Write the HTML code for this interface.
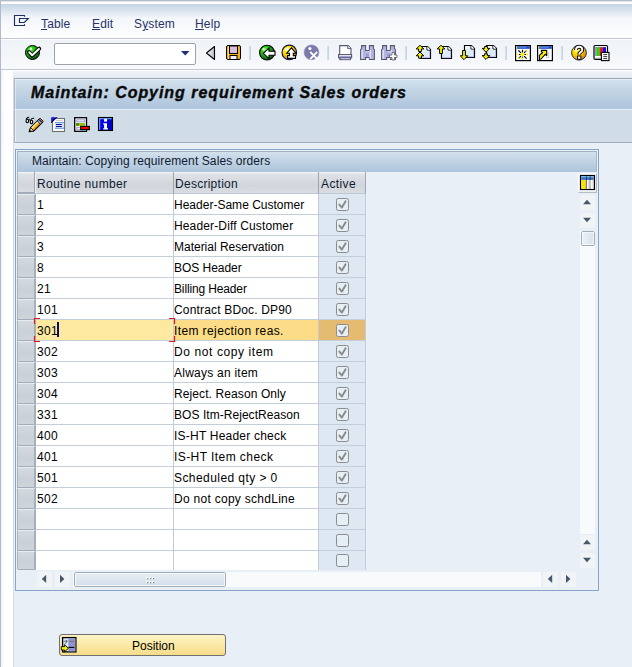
<!DOCTYPE html>
<html><head><meta charset="utf-8">
<style>
html,body{margin:0;padding:0}
body{width:632px;height:667px;overflow:hidden;position:relative;background:#e9eff7;font-family:"Liberation Sans",sans-serif;font-size:12px;color:#000}
.a{position:absolute}
#menubar{left:0;top:0;width:632px;height:38px;background:linear-gradient(#b3bdc9 0,#b3bdc9 1px,#dfe4ea 1px,#dfe4ea 2px,#fff 2px,#fff 4px,#c4d3e4 4px,#f3f6fa 18px,#fdfeff 37px)}
.mi{position:absolute;top:17px;color:#26336a;font-size:12px;line-height:14px;letter-spacing:0.15px}
.mi u{text-decoration:underline;text-underline-offset:1px}
#mline{left:0;top:38px;width:632px;height:1px;background:#bfc8d3}
#toolbar{left:0;top:39px;width:632px;height:30px;background:linear-gradient(#fff 0,#fff 1px,#eff3f7 1px,#f7f9fb 29px)}
#tline{left:0;top:69px;width:632px;height:1px;background:#bfc8d3}
#leftstrip{left:0;top:0;width:1px;height:667px;background:#b0bccb}
#strip2{left:1px;top:70px;width:12px;height:597px;background:linear-gradient(90deg,#eef1f4,#fff 3px,#fff)}
#strip3{left:13px;top:70px;width:1px;height:597px;background:linear-gradient(#f4f6f9,#dfe5ec 8px,#d5dce6 12px)}
#above{left:14px;top:70px;width:618px;height:8px;background:linear-gradient(#fff 0,#fff 1px,#eff3f7 1px,#e6ebf2 8px)}
#titlebar{left:14px;top:78px;width:618px;height:31px;box-sizing:border-box;border-top:1px solid #97a6b6;border-left:1px solid #a9b6c4;background:linear-gradient(#e6eef6 0,#e6eef6 1px,#d0dfeb 1px,#adc4dc 100%);box-shadow:inset 1px 0 rgba(255,255,255,0.45)}
#titlebar .t{position:absolute;left:16px;top:5px;font-weight:bold;font-style:italic;font-size:16px;letter-spacing:0.95px;color:#0a0a0a;-webkit-text-stroke:0.4px #0a0a0a}
#apptb{left:14px;top:109px;width:618px;height:34px;box-sizing:border-box;border-top:1px solid #e6edf3;border-left:1px solid #a9b6c4;border-bottom:1px solid #9fafbf;background:#d0dde7;box-shadow:inset 1px 0 #e8eef4}
#panel{left:15px;top:149px;width:584px;height:442px;box-sizing:border-box;border:1px solid #86a4c8;background:#e9eff7}
#ptitle{left:17px;top:151px;width:580px;height:21px;box-sizing:border-box;border-top:1px solid #a2b2c2;border-left:1px solid #a8b8c8;border-right:1px solid #a8b8c8;background:linear-gradient(#d2e0ec,#adc4db)}
#ptitle span{position:absolute;left:14px;top:2px;color:#101a30;letter-spacing:0.1px}
.hd{position:absolute;top:172px;height:22px;box-sizing:border-box;background:linear-gradient(#eff1f4 0,#eff1f4 1px,#dfe2e6 2px,#d1d6dc 65%,#d9dde1 100%);border-right:1px solid #9aa6b2;border-bottom:1px solid #bcc8d4}
.hd span{position:absolute;left:3px;top:5px;color:#101a30;letter-spacing:0.15px}
.rs{position:absolute;left:17px;width:19px;box-sizing:border-box;border-left:1px solid #a9b5c1;border-right:2px solid #a4b0bc;border-bottom:1px solid #a2adb9;border-top:1px solid #e9edf1;background:linear-gradient(#d4d9df,#c9d0d7 60%,#cfd5db)}
.c{position:absolute;box-sizing:border-box;border-bottom:1px solid #c3ced9;border-right:1px solid #bfcbd7}
.c span{position:absolute;left:1px;top:4px;color:#000;white-space:pre}
.ac svg{position:absolute;left:17px;top:4px}
.ic{position:absolute}
</style></head><body>
<div id="menubar" class="a"></div>
<svg class="a" style="left:0;top:0" width="32" height="32" viewBox="0 0 32 32"><path d="M24.5 16.8 V15.5 H14.5 V25.5 H24.5 V24.2 M19.5 18.5 H28.3 L24.3 22.5 H19.5 Z" fill="none" stroke="#1f2e66" stroke-width="1.15"/></svg>
<span class="mi" style="left:41px"><u>T</u>able</span>
<span class="mi" style="left:92px"><u>E</u>dit</span>
<span class="mi" style="left:134px">S<u>y</u>stem</span>
<span class="mi" style="left:195px"><u>H</u>elp</span>
<div id="mline" class="a"></div>
<div id="toolbar" class="a"></div>
<div id="tline" class="a"></div>
<svg class="a" style="left:0;top:0" width="632" height="70" viewBox="0 0 632 70">
<defs>
<radialGradient id="gG" cx="0.35" cy="0.3" r="0.75"><stop offset="0" stop-color="#9cff7a"/><stop offset="0.25" stop-color="#2ed21a"/><stop offset="0.7" stop-color="#118a12"/><stop offset="1" stop-color="#064a08"/></radialGradient>
<radialGradient id="gY" cx="0.35" cy="0.3" r="0.8"><stop offset="0" stop-color="#fffbd0"/><stop offset="0.3" stop-color="#ffe600"/><stop offset="0.75" stop-color="#f0a000"/><stop offset="1" stop-color="#c05a00"/></radialGradient>
<linearGradient id="gTri" x1="0" x2="1"><stop offset="0" stop-color="#ffffff"/><stop offset="1" stop-color="#b8bcc4"/></linearGradient>
</defs>
<!-- enter check -->
<circle cx="32.5" cy="52.5" r="7" fill="url(#gG)" stroke="#000" stroke-width="1"/>
<circle cx="31" cy="48.8" r="1.2" fill="#e8ffe0"/>
<path d="M29 52 L32.2 55.6 L39.2 48.6" fill="none" stroke="#000" stroke-width="4" stroke-linecap="round" stroke-linejoin="round"/>
<path d="M29.3 52.2 L32.2 55.2 L38.9 48.9" fill="none" stroke="#fff" stroke-width="2" stroke-linecap="round" stroke-linejoin="round"/>
<!-- command field -->
<rect x="54.5" y="43.5" width="141" height="21" rx="1.5" fill="#fff" stroke="#9ea1a6"/>
<path d="M181 51 H189.5 L185.25 55.5 Z" fill="#1e3278"/>
<!-- back triangle -->
<path d="M214.5 46.5 V59.5 L206.5 53 Z" fill="url(#gTri)" stroke="#000" stroke-width="1.1" stroke-linejoin="round"/>
<!-- save -->
<rect x="226.5" y="45.5" width="14" height="14" rx="1.5" fill="#f2b21c" stroke="#000"/>
<rect x="228" y="46" width="1.5" height="13" fill="#ffd860"/>
<rect x="229.5" y="46" width="8" height="7.5" fill="#d8bfe0" stroke="#000" stroke-width="1"/>
<rect x="230" y="55.5" width="7" height="4" fill="#f4eefa" stroke="#000" stroke-width="1"/>
<!-- separators -->
<rect x="249.5" y="46" width="1.2" height="14" fill="#b4c8de"/>
<rect x="327.5" y="46" width="1.2" height="14" fill="#b4c8de"/>
<rect x="405.5" y="46" width="1.2" height="14" fill="#b4c8de"/>
<rect x="505.5" y="46" width="1.2" height="14" fill="#b4c8de"/>
<rect x="561.5" y="46" width="1.2" height="14" fill="#b4c8de"/>
<!-- green back -->
<circle cx="267" cy="52.6" r="7.4" fill="url(#gG)" stroke="#000" stroke-width="1.1"/>
<path d="M263.3 53.3 L269 48 V51.2 H275 V55.3 H269 V58.6 Z" fill="#fff" stroke="#000" stroke-width="1.1"/>
<circle cx="263.5" cy="49.2" r="1.1" fill="#f0ffe8"/>
<!-- yellow up -->
<circle cx="289.3" cy="52.4" r="7.3" fill="url(#gY)" stroke="#10104a" stroke-width="1.1"/>
<circle cx="286.5" cy="49.3" r="1.2" fill="#fffff0"/>
<path d="M291.4 47.8 L296 53.2 H293.3 V55.6 H295.5 V58.4 H287.5 V55.6 H289.5 V53.2 H286.8 Z" fill="#fff" stroke="#000" stroke-width="1.1"/>
<!-- cancel gray -->
<circle cx="311.5" cy="52.3" r="7.4" fill="#7a79a8" stroke="#8a8ac4" stroke-width="0.6"/>
<circle cx="309.9" cy="48.6" r="1.6" fill="#fff"/>
<path d="M310.2 51.8 L317.2 59.2 M317.2 51.8 L310.2 59.2" stroke="#fff" stroke-width="1.9"/>
<!-- print -->
<path d="M339.7 54.2 V45.6 H348.2 L351 48.4 V54.2" fill="#fff" stroke="#55556e" stroke-width="1.1"/>
<path d="M347.7 45.6 V48.6 H351" fill="#e4e4f4" stroke="#55556e" stroke-width="0.9"/>
<rect x="338.6" y="54.6" width="13" height="3.2" fill="#fff" stroke="#55556e" stroke-width="1.1"/>
<rect x="339.4" y="56.2" width="11.6" height="1.3" fill="#8c8cd8"/>
<rect x="339.8" y="57.8" width="10.6" height="1.8" fill="#fff" stroke="#55556e" stroke-width="1.1"/>
<rect x="342" y="58.2" width="8" height="1.1" fill="#b8b8e8"/>
<!-- binoculars -->
<g fill="#b4b4e2" stroke="#55556e" stroke-width="1.05">
<path d="M360.6 59.4 V49.6 L361.6 48.6 V45.6 H365.6 V50.6 H369.4 V45.6 H373.4 V48.6 L374.4 49.6 V59.4 H369.4 V57.4 H365.6 V59.4 Z"/>
<path d="M381.6 59.4 V49.6 L382.6 48.6 V45.6 H386.6 V50.6 H390.4 V45.6 H394.4 V48.6 L395.4 49.6 V59.4 H390.4 V57.4 H386.6 V59.4 Z"/>
</g>
<g fill="#9a9ad0"><rect x="366.2" y="53.6" width="2.6" height="3.2"/><rect x="387.2" y="53.6" width="2.6" height="3.2"/></g>
<path d="M362.1 50 V58.6 M370.1 50 V58.6 M383.1 50 V58.6 M391.1 50 V58.6" stroke="#f4f4ff" stroke-width="1"/>
<path d="M366 51.6 H369 M387 51.6 H390" stroke="#d8d8f4" stroke-width="0.9"/>
<path d="M392 52.5 H394.5 V55 H397 V57.5 H394.5 V60 H392 V57.5 H389.5 V55 H392 Z" fill="#fff" stroke="#55556e" stroke-width="0.8"/>
<!-- page icons -->
<defs><linearGradient id="pgG" x1="0" y1="0" x2="1" y2="1"><stop offset="0" stop-color="#ffffff"/><stop offset="0.5" stop-color="#d8eaf6"/><stop offset="1" stop-color="#e8f0ff"/></linearGradient></defs>
<path d="M420.5 58.5 V46.5 H427.5 L430.5 49.5 V58.5 Z" fill="url(#pgG)" stroke="#000" stroke-width="1.15"/>
<path d="M421.5 57.6 H429.6 V50" fill="none" stroke="#b4b4f4" stroke-width="0.9"/>
<path d="M427 46.5 V50 H430.5" fill="#fff" stroke="#000" stroke-width="1"/>
<path d="M427.5 46.8 L430.2 49.5 H427.5 Z" fill="#fff"/>
<path d="M441.5 58.5 V46.5 H448.5 L451.5 49.5 V58.5 Z" fill="url(#pgG)" stroke="#000" stroke-width="1.15"/>
<path d="M442.5 57.6 H450.6 V50" fill="none" stroke="#b4b4f4" stroke-width="0.9"/>
<path d="M448 46.5 V50 H451.5" fill="#fff" stroke="#000" stroke-width="1"/>
<path d="M448.5 46.8 L451.2 49.5 H448.5 Z" fill="#fff"/>
<path d="M464.5 57.5 V45.5 H471.5 L474.5 48.5 V57.5 Z" fill="url(#pgG)" stroke="#000" stroke-width="1.15"/>
<path d="M465.5 56.6 H473.6 V49" fill="none" stroke="#b4b4f4" stroke-width="0.9"/>
<path d="M471 45.5 V49 H474.5" fill="#fff" stroke="#000" stroke-width="1"/>
<path d="M471.5 45.8 L474.2 48.5 H471.5 Z" fill="#fff"/>
<path d="M486.5 57.5 V45.5 H493.5 L496.5 48.5 V57.5 Z" fill="url(#pgG)" stroke="#000" stroke-width="1.15"/>
<path d="M487.5 56.6 H495.6 V49" fill="none" stroke="#b4b4f4" stroke-width="0.9"/>
<path d="M493 45.5 V49 H496.5" fill="#fff" stroke="#000" stroke-width="1"/>
<path d="M493.5 45.8 L496.2 48.5 H493.5 Z" fill="#fff"/>
<path d="M420 45.2 L423.8 49.0 H421.4 V51.5 H418.6 V49.0 H416.2 Z" fill="#f8f000" stroke="#000" stroke-width="1"/>
<path d="M420 52 L423.8 55.8 H421.4 V58.2 H418.6 V55.8 H416.2 Z" fill="#f8f000" stroke="#000" stroke-width="1"/>
<path d="M441 45.2 L444.8 49.0 H442.4 V53.5 H439.6 V49.0 H437.2 Z" fill="#f8f000" stroke="#000" stroke-width="1"/>
<path d="M464 59.6 L467.8 55.800000000000004 H465.4 V50.5 H462.6 V55.800000000000004 H460.2 Z" fill="#f8f000" stroke="#000" stroke-width="1"/>
<path d="M486 52.2 L489.8 48.400000000000006 H487.4 V46.5 H484.6 V48.400000000000006 H482.2 Z" fill="#f8f000" stroke="#000" stroke-width="1"/>
<path d="M486 59.4 L489.8 55.6 H487.4 V53.8 H484.6 V55.6 H482.2 Z" fill="#f8f000" stroke="#000" stroke-width="1"/>
<!-- new session -->
<rect x="515.6" y="45.6" width="14.8" height="15" fill="#fff" stroke="#000" stroke-width="1.2"/>
<rect x="516.2" y="46.2" width="13.6" height="2.6" fill="#1848c8"/>
<rect x="517.5" y="46.6" width="9" height="1.2" fill="#5a88e0"/>
<rect x="516.2" y="46.2" width="1" height="2.6" fill="#f8f000"/>
<g stroke="#000" stroke-width="1.2">
<path d="M522.5 49.8 V52.6 M522.5 56.4 V59.3 M518 54.5 H520.6 M524.4 54.5 H527 M518.4 50.4 L520.9 52.9 M524.1 56.1 L526.6 58.6 M526.6 50.4 L524.1 52.9 M520.9 56.1 L518.4 58.6"/>
</g>
<g stroke="#f8f000" stroke-width="1.4">
<path d="M517 54.5 H519 M526 54.5 H528.2 M526.8 50.2 L525.6 51.4 M518.2 58.8 L519.4 57.6 M522.5 57.6 V59"/>
</g>
<circle cx="522.5" cy="54.5" r="1.8" fill="#f8f000"/>
<!-- shortcut -->
<rect x="537.6" y="45.6" width="14.8" height="15" fill="#fff" stroke="#000" stroke-width="1.2"/>
<rect x="538.2" y="46.2" width="13.6" height="2.6" fill="#1848c8"/>
<rect x="539.5" y="46.6" width="9" height="1.2" fill="#5a88e0"/>
<rect x="538.2" y="46.2" width="1" height="2.6" fill="#f8f000"/>
<path d="M548.6 52 V57.5 H546" fill="none" stroke="#c8ccd8" stroke-width="0.9"/>
<path d="M541.3 50.4 V51.6 L542.6 52.5 L539.4 55.4 V59.4 L541 59 L545.2 54.4 L546.7 55.6 V50.4 Z" fill="#f8f000" stroke="#000" stroke-width="1.1" stroke-linejoin="round"/>
<!-- help -->
<circle cx="579" cy="52.7" r="7.4" fill="url(#gY)" stroke="#243060" stroke-width="1"/>
<path d="M576 50 Q576 46.8 579.2 46.8 Q582.3 46.8 582.3 49.7 Q582.3 51.4 580.3 52.4 Q579.2 53 579.2 54.6" fill="none" stroke="#000" stroke-width="3.8"/>
<path d="M576 50 Q576 46.8 579.2 46.8 Q582.3 46.8 582.3 49.7 Q582.3 51.4 580.3 52.4 Q579.2 53 579.2 54.6" fill="none" stroke="#fff" stroke-width="1.9"/>
<rect x="577.5" y="56" width="3.4" height="3.2" fill="#fff" stroke="#000" stroke-width="0.9"/>
<!-- layout -->
<rect x="594" y="45.5" width="13.5" height="14" rx="1.2" fill="#fff" stroke="#000" stroke-width="1.2"/>
<rect x="595.3" y="47" width="0.9" height="9" fill="#a050c0"/>
<rect x="596.2" y="47" width="3.2" height="9" fill="#10e010"/>
<rect x="599.4" y="47" width="3.6" height="9" fill="#f81818"/>
<rect x="603" y="47" width="3" height="9" fill="#1010f8"/>
<rect x="595.3" y="46.8" width="10.7" height="0.8" fill="#70a0a0" opacity="0.6"/>
<rect x="595" y="57.8" width="6" height="1" fill="#909090"/>
<rect x="601.4" y="52.4" width="7.6" height="8.2" fill="#fff" stroke="#000" stroke-width="1.1"/>
<path d="M603.3 54.6 H607.2 M603.3 56.6 H607.2 M603.3 58.6 H607.2" stroke="#000" stroke-width="0.8"/>
</svg>

<div id="leftstrip" class="a"></div>
<div id="strip2" class="a"></div>
<div id="strip3" class="a"></div>
<div id="above" class="a"></div>
<div id="titlebar" class="a"><span class="t">Maintain: Copying requirement Sales orders</span></div>
<div id="apptb" class="a"></div>
<svg class="a" style="left:0;top:110px" width="130" height="32" viewBox="0 110 130 32">
<!-- glasses -->
<g fill="#fff" stroke="#000" stroke-width="1.15">
<ellipse cx="27.3" cy="120.9" rx="1.25" ry="1.7"/>
<ellipse cx="31.5" cy="121.9" rx="1.25" ry="1.7"/>
</g>
<path d="M26.2 119.3 Q27 117.3 29.2 117.3 M28.5 119.6 Q29.5 119.3 30.4 120.4 M30.8 119.6 Q32 117.9 34.2 118.3" fill="none" stroke="#000" stroke-width="1.1"/>
<path d="M29 118.5 L30.5 119.3 M34 119.5 L35.5 120.5" stroke="#8fb4d0" stroke-width="0.8"/>
<!-- pencil -->
<path d="M29.2 131.6 L30.6 127.6 L38.9 119.3 L42.2 122.6 L33.9 130.9 Z" fill="#f8a010" stroke="#000" stroke-width="1.1" stroke-linejoin="round"/>
<path d="M31.2 127.6 L38.3 120.5 L39.4 121.6 L32.3 128.7 Z" fill="#fff2a0"/>
<path d="M37.2 121 L38.9 119.3 L42.2 122.6 L40.5 124.3 Z" fill="#94acd4" stroke="#000" stroke-width="0.7"/>
<path d="M38.9 119.3 L40 118.2 L43.3 121.5 L42.2 122.6 Z" fill="#f27888" stroke="#000" stroke-width="1"/>
<path d="M30.6 127.6 L33.9 130.9 L29.2 131.6 Z" fill="#f8eaa8" stroke="#000" stroke-width="0.8"/>
<path d="M29 131.8 L29.5 129.6 L31.3 131.3 Z" fill="#000"/>
<!-- doc icon -->
<rect x="52.5" y="118.5" width="12" height="13" fill="#fff" stroke="#6e6e6e" stroke-width="1.1"/>
<path d="M51.2 117.2 H57 L51.2 123 Z" fill="#0a10d8"/>
<path d="M51.4 122.8 L57 117.2" stroke="#000" stroke-width="1"/>
<rect x="55" y="122" width="9" height="6.8" fill="#cfe0f6"/>
<rect x="55" y="122" width="9" height="1" fill="#6f9ad6"/>
<rect x="55" y="127.8" width="9" height="1" fill="#6f9ad6"/>
<path d="M56 124.5 H61.8 M56 126.5 H61.8" stroke="#0a0aa0" stroke-width="1.1"/>
<path d="M56 120.5 H62.8" stroke="#c8c8c8" stroke-width="0.9"/>
<!-- delete row -->
<rect x="74.7" y="117.7" width="11.8" height="13.6" fill="#fff" stroke="#000" stroke-width="1.3"/>
<rect x="76.8" y="119.8" width="7.8" height="2" fill="#fff" stroke="#9a9ad2" stroke-width="1"/>
<rect x="76" y="123" width="9" height="2.8" fill="#94c010"/>
<rect x="76" y="123" width="3" height="2.8" fill="#5a8a10"/>
<rect x="76.8" y="127.3" width="4" height="2" fill="#fff" stroke="#9a9ad2" stroke-width="1"/>
<rect x="80" y="130" width="6" height="0.9" fill="#90a8d8"/>
<rect x="80.6" y="126.4" width="8.8" height="3.2" fill="#f00000" stroke="#000" stroke-width="1.1"/>
<!-- info -->
<rect x="98.6" y="117.6" width="13.8" height="12.8" fill="#0000f0" stroke="#000" stroke-width="1.3"/>
<rect x="108" y="118.3" width="3.8" height="11.5" fill="#0000c8"/>
<rect x="99.3" y="118.3" width="12.4" height="0.9" fill="#8ad0f8"/>
<rect x="99.3" y="118.3" width="0.9" height="11.4" fill="#8ad0f8"/>
<rect x="104.1" y="118.9" width="2.9" height="2.7" fill="#fff"/>
<path d="M103.2 123.2 H107 V128.3 H108 V129.6 H103.2 V128.3 H104.1 V124.4 H103.2 Z" fill="#fff"/>
</svg>

<div id="panel" class="a"></div>
<div id="ptitle" class="a"><span>Maintain: Copying requirement Sales orders</span></div>
<div class="hd" style="left:17px;width:18px;border-left:1px solid #a9b5c1;border-bottom:2px solid #a2adb9;height:22px"></div>
<div class="hd" style="left:35px;width:139px;border-left:1px solid #eef1f4"><span style="left:1px;letter-spacing:0.36px">Routine number</span></div>
<div class="hd" style="left:174px;width:145px"><span style="left:1px;letter-spacing:0.27px">Description</span></div>
<div class="hd" style="left:319px;width:47px"><span style="left:2px;letter-spacing:0.38px">Active</span></div>
<div class="a" style="left:366px;top:172px;width:1px;height:397px;background:#eef2f7"></div>
<div class="rs" style="top:194px;height:21px;"></div>
<div class="c" style="left:35px;top:194px;width:139px;height:21px;background:#fff;border-left:1px solid #a4b0bc"><span style="letter-spacing:0.3px">1</span></div>
<div class="c" style="left:174px;top:194px;width:145px;height:21px;background:#fff;"><span style="left:0;letter-spacing:0.01px">Header-Same Customer</span></div>
<div class="c ac" style="left:319px;top:194px;width:47px;height:21px;background:#dde8f2;"><svg width="13" height="13" viewBox="0 0 13 13"><rect x="0.5" y="0.5" width="12" height="12" rx="1.8" fill="#e6eef6" stroke="#8c8c8c"/><path d="M3.4 6.6 L5.9 9.6 L9.6 3.3" fill="none" stroke="#8a8a8a" stroke-width="1.9" stroke-linecap="round" stroke-linejoin="round"/></svg></div>
<div class="rs" style="top:215px;height:21px;"></div>
<div class="c" style="left:35px;top:215px;width:139px;height:21px;background:#fff;border-left:1px solid #a4b0bc"><span style="letter-spacing:0.3px">2</span></div>
<div class="c" style="left:174px;top:215px;width:145px;height:21px;background:#fff;"><span style="left:0;letter-spacing:0.14px">Header-Diff Customer</span></div>
<div class="c ac" style="left:319px;top:215px;width:47px;height:21px;background:#dde8f2;"><svg width="13" height="13" viewBox="0 0 13 13"><rect x="0.5" y="0.5" width="12" height="12" rx="1.8" fill="#e6eef6" stroke="#8c8c8c"/><path d="M3.4 6.6 L5.9 9.6 L9.6 3.3" fill="none" stroke="#8a8a8a" stroke-width="1.9" stroke-linecap="round" stroke-linejoin="round"/></svg></div>
<div class="rs" style="top:236px;height:21px;"></div>
<div class="c" style="left:35px;top:236px;width:139px;height:21px;background:#fff;border-left:1px solid #a4b0bc"><span style="letter-spacing:0.3px">3</span></div>
<div class="c" style="left:174px;top:236px;width:145px;height:21px;background:#fff;"><span style="left:0;letter-spacing:-0.01px">Material Reservation</span></div>
<div class="c ac" style="left:319px;top:236px;width:47px;height:21px;background:#dde8f2;"><svg width="13" height="13" viewBox="0 0 13 13"><rect x="0.5" y="0.5" width="12" height="12" rx="1.8" fill="#e6eef6" stroke="#8c8c8c"/><path d="M3.4 6.6 L5.9 9.6 L9.6 3.3" fill="none" stroke="#8a8a8a" stroke-width="1.9" stroke-linecap="round" stroke-linejoin="round"/></svg></div>
<div class="rs" style="top:257px;height:21px;"></div>
<div class="c" style="left:35px;top:257px;width:139px;height:21px;background:#fff;border-left:1px solid #a4b0bc"><span style="letter-spacing:0.3px">8</span></div>
<div class="c" style="left:174px;top:257px;width:145px;height:21px;background:#fff;"><span style="left:0;letter-spacing:-0.03px">BOS Header</span></div>
<div class="c ac" style="left:319px;top:257px;width:47px;height:21px;background:#dde8f2;"><svg width="13" height="13" viewBox="0 0 13 13"><rect x="0.5" y="0.5" width="12" height="12" rx="1.8" fill="#e6eef6" stroke="#8c8c8c"/><path d="M3.4 6.6 L5.9 9.6 L9.6 3.3" fill="none" stroke="#8a8a8a" stroke-width="1.9" stroke-linecap="round" stroke-linejoin="round"/></svg></div>
<div class="rs" style="top:278px;height:21px;"></div>
<div class="c" style="left:35px;top:278px;width:139px;height:21px;background:#fff;border-left:1px solid #a4b0bc"><span style="letter-spacing:0.3px">21</span></div>
<div class="c" style="left:174px;top:278px;width:145px;height:21px;background:#fff;"><span style="left:0;letter-spacing:-0.14px">Billing Header</span></div>
<div class="c ac" style="left:319px;top:278px;width:47px;height:21px;background:#dde8f2;"><svg width="13" height="13" viewBox="0 0 13 13"><rect x="0.5" y="0.5" width="12" height="12" rx="1.8" fill="#e6eef6" stroke="#8c8c8c"/><path d="M3.4 6.6 L5.9 9.6 L9.6 3.3" fill="none" stroke="#8a8a8a" stroke-width="1.9" stroke-linecap="round" stroke-linejoin="round"/></svg></div>
<div class="rs" style="top:299px;height:21px;"></div>
<div class="c" style="left:35px;top:299px;width:139px;height:21px;background:#fff;border-left:1px solid #a4b0bc"><span style="letter-spacing:0.3px">101</span></div>
<div class="c" style="left:174px;top:299px;width:145px;height:21px;background:#fff;"><span style="left:0;letter-spacing:0.17px">Contract BDoc. DP90</span></div>
<div class="c ac" style="left:319px;top:299px;width:47px;height:21px;background:#dde8f2;"><svg width="13" height="13" viewBox="0 0 13 13"><rect x="0.5" y="0.5" width="12" height="12" rx="1.8" fill="#e6eef6" stroke="#8c8c8c"/><path d="M3.4 6.6 L5.9 9.6 L9.6 3.3" fill="none" stroke="#8a8a8a" stroke-width="1.9" stroke-linecap="round" stroke-linejoin="round"/></svg></div>
<div class="rs" style="top:320px;height:21px;"></div>
<div class="c" style="left:35px;top:320px;width:139px;height:21px;background:#fde9a0;border-left:1px solid #a4b0bc"><span style="letter-spacing:0.3px">301</span></div>
<div class="c" style="left:174px;top:320px;width:145px;height:21px;background:#fcdc86;"><span style="left:0;letter-spacing:0.39px">Item rejection reas.</span></div>
<div class="c ac" style="left:319px;top:320px;width:47px;height:21px;background:#e4bb70;"><svg width="13" height="13" viewBox="0 0 13 13"><rect x="0.5" y="0.5" width="12" height="12" rx="1.8" fill="#e6eef6" stroke="#8c8c8c"/><path d="M3.4 6.6 L5.9 9.6 L9.6 3.3" fill="none" stroke="#8a8a8a" stroke-width="1.9" stroke-linecap="round" stroke-linejoin="round"/></svg></div>
<div class="rs" style="top:341px;height:21px;"></div>
<div class="c" style="left:35px;top:341px;width:139px;height:21px;background:#fff;border-left:1px solid #a4b0bc"><span style="letter-spacing:0.3px">302</span></div>
<div class="c" style="left:174px;top:341px;width:145px;height:21px;background:#fff;"><span style="left:0;letter-spacing:0.6px">Do not copy item</span></div>
<div class="c ac" style="left:319px;top:341px;width:47px;height:21px;background:#dde8f2;"><svg width="13" height="13" viewBox="0 0 13 13"><rect x="0.5" y="0.5" width="12" height="12" rx="1.8" fill="#e6eef6" stroke="#8c8c8c"/><path d="M3.4 6.6 L5.9 9.6 L9.6 3.3" fill="none" stroke="#8a8a8a" stroke-width="1.9" stroke-linecap="round" stroke-linejoin="round"/></svg></div>
<div class="rs" style="top:362px;height:21px;"></div>
<div class="c" style="left:35px;top:362px;width:139px;height:21px;background:#fff;border-left:1px solid #a4b0bc"><span style="letter-spacing:0.3px">303</span></div>
<div class="c" style="left:174px;top:362px;width:145px;height:21px;background:#fff;"><span style="left:0;letter-spacing:0.24px">Always an item</span></div>
<div class="c ac" style="left:319px;top:362px;width:47px;height:21px;background:#dde8f2;"><svg width="13" height="13" viewBox="0 0 13 13"><rect x="0.5" y="0.5" width="12" height="12" rx="1.8" fill="#e6eef6" stroke="#8c8c8c"/><path d="M3.4 6.6 L5.9 9.6 L9.6 3.3" fill="none" stroke="#8a8a8a" stroke-width="1.9" stroke-linecap="round" stroke-linejoin="round"/></svg></div>
<div class="rs" style="top:383px;height:21px;"></div>
<div class="c" style="left:35px;top:383px;width:139px;height:21px;background:#fff;border-left:1px solid #a4b0bc"><span style="letter-spacing:0.3px">304</span></div>
<div class="c" style="left:174px;top:383px;width:145px;height:21px;background:#fff;"><span style="left:0;letter-spacing:0.1px">Reject. Reason Only</span></div>
<div class="c ac" style="left:319px;top:383px;width:47px;height:21px;background:#dde8f2;"><svg width="13" height="13" viewBox="0 0 13 13"><rect x="0.5" y="0.5" width="12" height="12" rx="1.8" fill="#e6eef6" stroke="#8c8c8c"/><path d="M3.4 6.6 L5.9 9.6 L9.6 3.3" fill="none" stroke="#8a8a8a" stroke-width="1.9" stroke-linecap="round" stroke-linejoin="round"/></svg></div>
<div class="rs" style="top:404px;height:21px;"></div>
<div class="c" style="left:35px;top:404px;width:139px;height:21px;background:#fff;border-left:1px solid #a4b0bc"><span style="letter-spacing:0.3px">331</span></div>
<div class="c" style="left:174px;top:404px;width:145px;height:21px;background:#fff;"><span style="left:0;letter-spacing:0.05px">BOS Itm-RejectReason</span></div>
<div class="c ac" style="left:319px;top:404px;width:47px;height:21px;background:#dde8f2;"><svg width="13" height="13" viewBox="0 0 13 13"><rect x="0.5" y="0.5" width="12" height="12" rx="1.8" fill="#e6eef6" stroke="#8c8c8c"/><path d="M3.4 6.6 L5.9 9.6 L9.6 3.3" fill="none" stroke="#8a8a8a" stroke-width="1.9" stroke-linecap="round" stroke-linejoin="round"/></svg></div>
<div class="rs" style="top:425px;height:21px;"></div>
<div class="c" style="left:35px;top:425px;width:139px;height:21px;background:#fff;border-left:1px solid #a4b0bc"><span style="letter-spacing:0.3px">400</span></div>
<div class="c" style="left:174px;top:425px;width:145px;height:21px;background:#fff;"><span style="left:0;letter-spacing:0.22px">IS-HT Header check</span></div>
<div class="c ac" style="left:319px;top:425px;width:47px;height:21px;background:#dde8f2;"><svg width="13" height="13" viewBox="0 0 13 13"><rect x="0.5" y="0.5" width="12" height="12" rx="1.8" fill="#e6eef6" stroke="#8c8c8c"/><path d="M3.4 6.6 L5.9 9.6 L9.6 3.3" fill="none" stroke="#8a8a8a" stroke-width="1.9" stroke-linecap="round" stroke-linejoin="round"/></svg></div>
<div class="rs" style="top:446px;height:21px;"></div>
<div class="c" style="left:35px;top:446px;width:139px;height:21px;background:#fff;border-left:1px solid #a4b0bc"><span style="letter-spacing:0.3px">401</span></div>
<div class="c" style="left:174px;top:446px;width:145px;height:21px;background:#fff;"><span style="left:0;letter-spacing:0.43px">IS-HT Item check</span></div>
<div class="c ac" style="left:319px;top:446px;width:47px;height:21px;background:#dde8f2;"><svg width="13" height="13" viewBox="0 0 13 13"><rect x="0.5" y="0.5" width="12" height="12" rx="1.8" fill="#e6eef6" stroke="#8c8c8c"/><path d="M3.4 6.6 L5.9 9.6 L9.6 3.3" fill="none" stroke="#8a8a8a" stroke-width="1.9" stroke-linecap="round" stroke-linejoin="round"/></svg></div>
<div class="rs" style="top:467px;height:21px;"></div>
<div class="c" style="left:35px;top:467px;width:139px;height:21px;background:#fff;border-left:1px solid #a4b0bc"><span style="letter-spacing:0.3px">501</span></div>
<div class="c" style="left:174px;top:467px;width:145px;height:21px;background:#fff;"><span style="left:0;letter-spacing:0.43px">Scheduled qty &gt; 0</span></div>
<div class="c ac" style="left:319px;top:467px;width:47px;height:21px;background:#dde8f2;"><svg width="13" height="13" viewBox="0 0 13 13"><rect x="0.5" y="0.5" width="12" height="12" rx="1.8" fill="#e6eef6" stroke="#8c8c8c"/><path d="M3.4 6.6 L5.9 9.6 L9.6 3.3" fill="none" stroke="#8a8a8a" stroke-width="1.9" stroke-linecap="round" stroke-linejoin="round"/></svg></div>
<div class="rs" style="top:488px;height:21px;"></div>
<div class="c" style="left:35px;top:488px;width:139px;height:21px;background:#fff;border-left:1px solid #a4b0bc"><span style="letter-spacing:0.3px">502</span></div>
<div class="c" style="left:174px;top:488px;width:145px;height:21px;background:#fff;"><span style="left:0;letter-spacing:0.28px">Do not copy schdLine</span></div>
<div class="c ac" style="left:319px;top:488px;width:47px;height:21px;background:#dde8f2;"><svg width="13" height="13" viewBox="0 0 13 13"><rect x="0.5" y="0.5" width="12" height="12" rx="1.8" fill="#e6eef6" stroke="#8c8c8c"/><path d="M3.4 6.6 L5.9 9.6 L9.6 3.3" fill="none" stroke="#8a8a8a" stroke-width="1.9" stroke-linecap="round" stroke-linejoin="round"/></svg></div>
<div class="rs" style="top:509px;height:21px;"></div>
<div class="c" style="left:35px;top:509px;width:139px;height:21px;background:#fff;border-left:1px solid #a4b0bc"><span style="letter-spacing:0.3px"></span></div>
<div class="c" style="left:174px;top:509px;width:145px;height:21px;background:#fff;"><span style="left:0;letter-spacing:0px"></span></div>
<div class="c ac" style="left:319px;top:509px;width:47px;height:21px;background:#dde8f2;"><svg width="13" height="13" viewBox="0 0 13 13"><rect x="0.5" y="0.5" width="12" height="12" rx="1.8" fill="#e6eef6" stroke="#8c8c8c"/></svg></div>
<div class="rs" style="top:530px;height:21px;"></div>
<div class="c" style="left:35px;top:530px;width:139px;height:21px;background:#fff;border-left:1px solid #a4b0bc"><span style="letter-spacing:0.3px"></span></div>
<div class="c" style="left:174px;top:530px;width:145px;height:21px;background:#fff;"><span style="left:0;letter-spacing:0px"></span></div>
<div class="c ac" style="left:319px;top:530px;width:47px;height:21px;background:#dde8f2;"><svg width="13" height="13" viewBox="0 0 13 13"><rect x="0.5" y="0.5" width="12" height="12" rx="1.8" fill="#e6eef6" stroke="#8c8c8c"/></svg></div>
<div class="rs" style="top:551px;height:19px;border-bottom:1px solid #a2adb9;border-radius:0 0 2px 2px;"></div>
<div class="c" style="left:35px;top:551px;width:139px;height:19px;background:#fff;border-bottom:none;border-left:1px solid #a4b0bc"><span style="letter-spacing:0.3px"></span></div>
<div class="c" style="left:174px;top:551px;width:145px;height:19px;background:#fff;border-bottom:none;"><span style="left:0;letter-spacing:0px"></span></div>
<div class="c ac" style="left:319px;top:551px;width:47px;height:19px;background:#dde8f2;border-bottom:none;"><svg style="top:3px" width="13" height="13" viewBox="0 0 13 13"><rect x="0.5" y="0.5" width="12" height="12" rx="1.8" fill="#e6eef6" stroke="#8c8c8c"/></svg></div>
<!-- focus brackets -->
<svg class="a" style="left:0;top:300px" width="200" height="50" viewBox="0 300 200 50">
<path d="M40 318.5 H34.5 V324 M34.5 336 V341.5 H40 M169 318.5 H174.5 V324 M174.5 336 V341.5 H169" fill="none" stroke="#e8141a" stroke-width="1.2"/>
<rect x="57" y="322" width="2" height="15" fill="#0c0c5c"/>
</svg>
<!-- vertical scrollbar + config button -->
<div class="a" style="left:578px;top:173px;width:19px;height:20px;box-sizing:border-box;background:#eef1f4;border-right:1px solid #b4bcc6;border-bottom:1px solid #b4bcc6;border-top:1px solid #f8fafc;border-left:1px solid #f8fafc"></div>
<svg class="a" style="left:0;top:0" width="632" height="600" viewBox="0 0 632 600">
<defs>
<linearGradient id="cfgTop" x1="0" y1="0" x2="0" y2="1"><stop offset="0" stop-color="#8fd0f8"/><stop offset="1" stop-color="#2f6ec8"/></linearGradient>
<linearGradient id="thumbV" x1="0" y1="0" x2="1" y2="0"><stop offset="0" stop-color="#eef3f8"/><stop offset="1" stop-color="#d6e0ea"/></linearGradient>
<linearGradient id="thumbH" x1="0" y1="0" x2="0" y2="1"><stop offset="0" stop-color="#e8eef5"/><stop offset="1" stop-color="#d2dee9"/></linearGradient>
</defs>
<rect x="580.6" y="175.6" width="13.8" height="13.8" fill="#fff" stroke="#000" stroke-width="1.3"/>
<rect x="581.3" y="176.3" width="12.4" height="3.6" fill="#3370c8"/>
<rect x="581.3" y="176.3" width="12.4" height="1" fill="#86cef8"/>
<rect x="581.3" y="180" width="4.6" height="8.8" fill="#f8e400"/>
<rect x="585.9" y="176.3" width="0.9" height="12.5" fill="#303040"/>
<rect x="589.6" y="176.3" width="0.9" height="12.5" fill="#303040"/>
<rect x="586.8" y="180" width="2.8" height="8.8" fill="#f8f8f8"/>
<rect x="588.7" y="180" width="0.9" height="8.8" fill="#b0b0b0"/>
<rect x="590.5" y="180" width="3.2" height="8.8" fill="#f8f8f8"/>
<rect x="592.8" y="180" width="0.9" height="8.8" fill="#b0b0b0"/>
<!-- v track -->
<rect x="580" y="195" width="15" height="339" fill="#f9fafb"/>
<rect x="580" y="195" width="15" height="15" fill="#f1f4f7"/>
<rect x="580" y="213" width="15" height="15" fill="#f1f4f7"/>
<rect x="580" y="210" width="15" height="3" fill="#e8eef5"/>
<rect x="580" y="228" width="15" height="3" fill="#e8eef5"/>
<path d="M583 204.2 L587 199.8 L591 204.2 Z" fill="#47586b"/>
<path d="M583 217.8 L591 217.8 L587 222.2 Z" fill="#47586b"/>
<rect x="581.5" y="231.5" width="13" height="14" rx="1.5" fill="url(#thumbV)" stroke="#a3adb8"/>
<rect x="582.5" y="232.5" width="11" height="12" fill="none" stroke="#fafcfe" stroke-width="0.8"/>
<rect x="580" y="534" width="15" height="34" fill="#e8eef5"/>
<rect x="580" y="535" width="15" height="15" fill="#f1f4f7"/>
<rect x="580" y="553" width="15" height="15" fill="#f1f4f7"/>
<path d="M583 544.2 L587 539.8 L591 544.2 Z" fill="#47586b"/>
<path d="M583 557.8 L591 557.8 L587 562.2 Z" fill="#47586b"/>
<!-- h scrollbar -->
<rect x="37" y="572" width="504" height="15" fill="#f9fafb"/>
<rect x="37" y="572" width="15" height="15" fill="#f1f4f7"/>
<rect x="55" y="572" width="15" height="15" fill="#f1f4f7"/>
<rect x="52" y="572" width="3" height="15" fill="#e8eef5"/>
<rect x="70" y="572" width="3" height="15" fill="#e8eef5"/>
<path d="M46.2 574.8 L41.8 578.9 L46.2 583 Z" fill="#47586b"/>
<path d="M60 574.8 L64.4 578.9 L60 583 Z" fill="#47586b"/>
<rect x="74.5" y="572.5" width="151" height="14" rx="1.5" fill="url(#thumbH)" stroke="#a0acb8"/>
<rect x="75.5" y="573.5" width="149" height="12" fill="none" stroke="#f8fafc" stroke-width="0.9"/>
<g fill="#fff"><rect x="146" y="577" width="2" height="2"/><rect x="149" y="577" width="2" height="2"/><rect x="152" y="577" width="2" height="2"/><rect x="146" y="581" width="2" height="2"/><rect x="149" y="581" width="2" height="2"/><rect x="152" y="581" width="2" height="2"/></g>
<g fill="#7c8894"><rect x="147" y="578" width="1.2" height="1.2"/><rect x="150" y="578" width="1.2" height="1.2"/><rect x="153" y="578" width="1.2" height="1.2"/><rect x="147" y="582" width="1.2" height="1.2"/><rect x="150" y="582" width="1.2" height="1.2"/><rect x="153" y="582" width="1.2" height="1.2"/></g>
<rect x="543" y="572" width="15" height="15" fill="#f1f4f7"/>
<rect x="561" y="572" width="15" height="15" fill="#f1f4f7"/>
<path d="M552.2 574.8 L547.8 578.9 L552.2 583 Z" fill="#47586b"/>
<path d="M566 574.8 L570.4 578.9 L566 583 Z" fill="#47586b"/>
</svg>
<!-- Position button -->
<div class="a" style="left:59px;top:634px;width:167px;height:22px;box-sizing:border-box;border:1px solid #707070;border-radius:3px;background:linear-gradient(#fdf3c6,#fae9a6 50%,#f6dc8a)"></div>
<span class="a" style="left:132px;top:639px;font-size:12px;color:#000">Position</span>
<svg class="a" style="left:0;top:600px" width="100" height="67" viewBox="0 600 100 67">
<rect x="62.6" y="637.6" width="13.3" height="14.3" fill="#d6ecfa" stroke="#000" stroke-width="1.3"/>
<rect x="68.3" y="638.3" width="7" height="13" fill="#9494cc"/>
<path d="M69.2 641.3 H74.3" stroke="#707080" stroke-width="1"/>
<path d="M68.6 647.4 H74.3" stroke="#000" stroke-width="1.1"/>
<path d="M63.6 641.2 H67.2 M65.8 639.9 L67.3 641.2 L65.8 642.5 M67 641.6 L64.2 644.6" fill="none" stroke="#505050" stroke-width="0.8"/>
<path d="M61.3 646.6 H64.6 V644.8 L68.4 648.3 L64.6 651.8 V650 H61.3 Z" fill="#f8f000" stroke="#000" stroke-width="0.9"/>
</svg>

</body></html>
